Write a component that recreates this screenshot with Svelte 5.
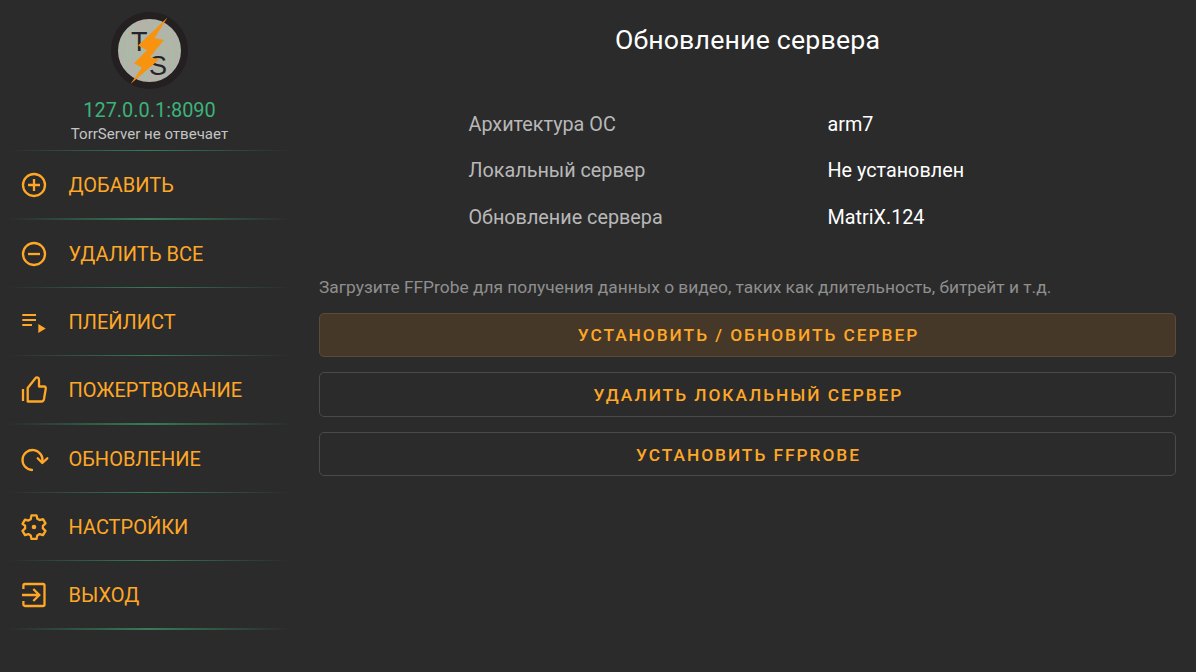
<script>
  const menu = [
    { label: 'ДОБАВИТЬ', icon: 'add' },
    { label: 'УДАЛИТЬ ВСЕ', icon: 'remove' },
    { label: 'ПЛЕЙЛИСТ', icon: 'playlist' },
    { label: 'ПОЖЕРТВОВАНИЕ', icon: 'thumb' },
    { label: 'ОБНОВЛЕНИЕ', icon: 'refresh' },
    { label: 'НАСТРОЙКИ', icon: 'gear' },
    { label: 'ВЫХОД', icon: 'exit' }
  ];

  const info = [
    ['Архитектура ОС', 'arm7'],
    ['Локальный сервер', 'Не установлен'],
    ['Обновление сервера', 'MatriX.124']
  ];

  const buttons = [
    { label: 'Установить / Обновить сервер', focused: true },
    { label: 'Удалить локальный сервер', focused: false },
    { label: 'Установить FFProbe', focused: false }
  ];

  // tiny green "matrix" streaks inside the logo
  const streaks = [];
  for (let i = 0; i < 22; i++) {
    streaks.push({ x: 118 + i * 3, y: 18 + ((i * 17) % 40), h: 10 + ((i * 7) % 22) });
  }
</script>

<div class="screen">
  <aside class="sidebar">
    <header class="brand">
      <svg class="logo" viewBox="110 11 80 80" width="80" height="80">
        <defs>
          <clipPath id="logo-clip"><circle cx="149.500" cy="50.500" r="33" /></clipPath>
        </defs>
        <circle cx="149.500" cy="50.500" r="33" fill="#b3b3aa" />
        <g clip-path="url(#logo-clip)">
          {#each streaks as s}
            <rect x={s.x} y={s.y} width="1.2" height={s.h} fill="#8ccf9c" opacity="0.55" />
          {/each}
        </g>
        <circle cx="149.500" cy="50.500" r="35" fill="none" stroke="#241f21" stroke-width="7" />
        <text x="131" y="51" class="logo-letter">T</text>
        <text x="149" y="75" class="logo-letter">S</text>
        <path d="M167.500 17.500L138 45.500L147 50L134 63.500L142 67.500L130.500 84L159 59.500L150 57L164 40L154.500 38Z" fill="#f7930f" />
      </svg>
      <div class="host">127.0.0.1:8090</div>
      <div class="status">TorrServer не отвечает</div>
    </header>
    <div class="line"></div>

    {#each menu as item}
      <div class="item">
        <span class="icon">
          <svg viewBox="0 0 26 26" width="26" height="26" fill="none" stroke="currentColor" stroke-width="2.300">
            {#if item.icon === 'add'}
              <circle cx="13" cy="13" r="11" />
              <path d="M13 7v12M7 13h12" />
            {:else if item.icon === 'remove'}
              <circle cx="13" cy="13" r="11" />
              <path d="M7 13h12" />
            {:else if item.icon === 'playlist'}
              <path d="M1.300 6h13.700M1.300 11h13.700M1.300 16h9.700" stroke-width="2.200" />
              <path d="M17.300 15l7.400 4.500-7.400 4.500z" fill="currentColor" stroke="none" />
            {:else if item.icon === 'thumb'}
              <path d="M2 12v12" />
              <path d="M6.700 11L15 0.500c2-.5 3 .8 3 2.500V9.500h5c1.500 0 2 1 1.700 2.500l-1.700 10c-.3 1.500-1 2.500-2.500 2.500H6.700z" stroke-linejoin="round" />
            {:else if item.icon === 'refresh'}
              <path d="M11 24A10 10 0 1 1 21.300 16" stroke-linecap="round" />
              <path d="M16.700 12.300L21.300 17l5-4.700" stroke-linecap="round" stroke-linejoin="round" />
            {:else if item.icon === 'gear'}
              <path d="M10.500 1.300h5l.8 3.500 2.300 1.300 3.400-1 2.500 4.300-2.600 2.400v2.600l2.600 2.400-2.500 4.300-3.400-1-2.300 1.300-.8 3.500h-5l-.8-3.500-2.300-1.300-3.400 1-2.500-4.300 2.600-2.400v-2.600L1.500 9.900 4 5.600l3.400 1 2.300-1.300z" stroke-linejoin="round" />
              <circle cx="13" cy="13" r="2.300" fill="currentColor" stroke="none" />
            {:else if item.icon === 'exit'}
              <path d="M2.400 7V3.500A1.500 1.500 0 0 1 3.900 2h18.100a1.500 1.500 0 0 1 1.500 1.500v19a1.500 1.500 0 0 1-1.500 1.500H3.900a1.500 1.500 0 0 1-1.500-1.500V19" />
              <path d="M1 13h16.500M12.300 7l6 6-6 6" />
            {/if}
          </svg>
        </span>
        <span class="label">{item.label}</span>
      </div>
      <div class="line"></div>
    {/each}
  </aside>

  <main class="content">
    <h1>Обновление сервера</h1>
    <div class="info">
      {#each info as row}
        <div class="row">
          <span class="key">{row[0]}</span>
          <span class="val">{row[1]}</span>
        </div>
      {/each}
    </div>
    <p class="hint">Загрузите FFProbe для получения данных о видео, таких как длительность, битрейт и т.д.</p>
    <div class="buttons">
      {#each buttons as b}
        <button class:focused={b.focused}>{b.label}</button>
      {/each}
    </div>
  </main>
</div>

<style>
  :global(body) {
    margin: 0;
    background: #2b2b2b;
  }

  .screen {
    display: flex;
    width: 1196px;
    height: 672px;
    overflow: hidden;
    background: #2b2b2b;
    font-family: Roboto, sans-serif;
  }

  .sidebar {
    width: 299px;
    flex: none;
    display: flex;
    flex-direction: column;
  }

  .brand {
    height: 150px;
    display: flex;
    flex-direction: column;
    align-items: center;
  }

  .logo {
    margin-top: 11px;
  }

  .logo-letter {
    font-family: 'Liberation Sans', sans-serif;
    font-size: 27px;
    fill: #26242a;
  }

  .host {
    margin-top: 7px;
    font-size: 19.900px;
    line-height: 26px;
    color: #3cb37a;
  }

  .status {
    font-size: 15.050px;
    line-height: 20px;
    margin-top: 0;
    color: #c4c4c4;
  }

  .line {
    height: 1.330px;
    flex: none;
    width: 282px;
    margin: 0 8px;
    background: linear-gradient(90deg, rgba(60, 179, 122, 0), rgba(60, 179, 122, 0.6) 50%, rgba(60, 179, 122, 0));
  }

  .item {
    height: 67px;
    flex: none;
    box-sizing: border-box;
    padding-top: 1px;
    display: flex;
    align-items: center;
    color: #ffa726;
  }

  .icon {
    width: 26px;
    height: 26px;
    margin-left: 21px;
    display: flex;
  }

  .icon svg {
    overflow: visible;
  }

  .label {
    margin-left: 21.500px;
    font-size: 20px;
  }

  .content {
    flex: 1;
    padding: 0 20px;
    display: flex;
    flex-direction: column;
  }

  h1 {
    margin: 23px 0 0;
    font-size: 26.670px;
    line-height: 34px;
    letter-spacing: 0.2px;
    font-weight: 400;
    text-align: center;
    color: #fff;
  }

  .info {
    margin-top: 44px;
    padding-left: 149.500px;
  }

  .row {
    height: 46.500px;
    display: flex;
    align-items: center;
    font-size: 19.800px;
  }

  .key {
    width: 359px;
    color: #b8b8b8;
  }

  .val {
    color: #fff;
  }

  .hint {
    margin: 34px 0 0;
    font-size: 17.380px;
    line-height: 24px;
    color: #8f8f8f;
  }

  .buttons {
    margin-top: 14px;
    display: flex;
    flex-direction: column;
    gap: 15px;
  }

  button {
    height: 44.670px;
    padding: 1px 0 0 2px;
    background: transparent;
    border: 1px solid #4a4a4a;
    border-radius: 5px;
    font-family: Roboto, sans-serif;
    font-size: 17.330px;
    font-weight: 500;
    letter-spacing: 1.950px;
    text-transform: uppercase;
    color: #ffa726;
  }

  button.focused {
    background: #453829;
    border-color: #5a4c39;
  }
</style>
